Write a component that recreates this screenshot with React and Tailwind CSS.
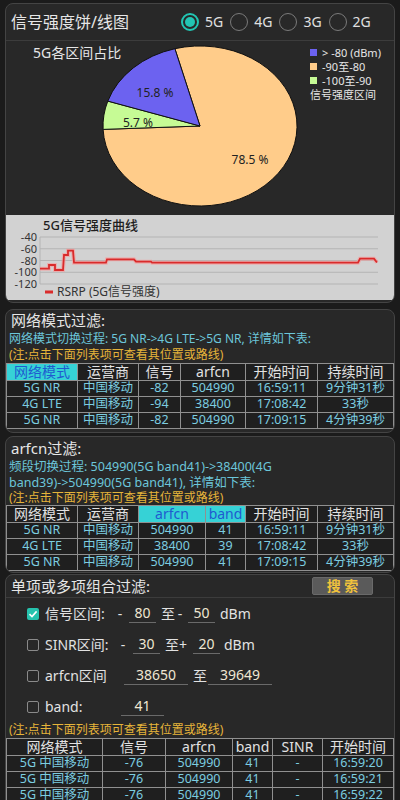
import React from "react";

function Radio({ label, checked }) {
  return (
    <div className="flex items-center gap-[6px]">
      {checked ? (
        <span className="w-[18px] h-[18px] rounded-full border-2 border-[#22c5b3] flex items-center justify-center">
          <span className="w-[10px] h-[10px] rounded-full bg-[#22c5b3]" />
        </span>
      ) : (
        <span className="w-[18px] h-[18px] rounded-full border-[1.5px] border-[#7a7a7a]" />
      )}
      <span className="text-[14px] leading-none text-[#e0e0e0]">{label}</span>
    </div>
  );
}

function Table({ gridClass, header, hl = [], rows }) {
  return (
    <div className={"grid gap-px bg-[#909090] p-px " + gridClass}>
      {header.map((h, i) => (
        <div
          key={"h" + i}
          className={
            "h-[16px] flex items-center justify-center text-[14px] leading-none " +
            (hl.includes(i) ? "bg-[#36d2d6] text-[#1f5bd0]" : "bg-[#1f1f1f] text-[#e2e2e2]")
          }
        >
          {h}
        </div>
      ))}
      {rows.map((r, ri) =>
        r.map((c, ci) => (
          <div
            key={ri + "-" + ci}
            className="h-[15px] flex items-center justify-center bg-[#1f1f1f] text-[12.5px] leading-none text-[#7ccde0] whitespace-nowrap"
          >
            {c}
          </div>
        ))
      )}
    </div>
  );
}

function Note() {
  return <span className="text-[12px] leading-none text-[#e6b43a]">(注:点击下面列表项可查看其位置或路线)</span>;
}

function Check({ checked }) {
  return checked ? (
    <span className="w-[12px] h-[12px] rounded-[2px] bg-[#26c2ad] flex items-center justify-center">
      <svg width="10" height="10" viewBox="0 0 10 10">
        <path d="M1.5 5.2 L4 7.6 L8.6 2.4" fill="none" stroke="#ffffff" strokeWidth="1.6" />
      </svg>
    </span>
  ) : (
    <span className="w-[12px] h-[12px] rounded-[2px] border-[1.5px] border-[#8a8a8a]" />
  );
}

function Input({ value, w }) {
  return (
    <span className={"h-[18px] flex items-center justify-center border-b border-[#6a6a6a] text-[14px] leading-none text-[#efe6d2] " + w}>
      {value}
    </span>
  );
}

export default function App() {
  const orange = "#ffcc8a";
  const blue = "#6c62f0";
  const green = "#c6fb95";
  const linePts =
    "34,53.7 43,53.7 43,50 49,50 49,55 57,55 58,40 62,40 62,35.7 67,35.7 68,47.7 100,47.7 101,44.3 128,44.3 130,46.7 145,46.7 146,47.7 352,47.7 354,43.7 368,43.7 371,47.5";
  const ys = [22, 33.75, 45.5, 57.25, 69];
  const yl = ["-40", "-60", "-80", "-100", "-120"];

  return (
    <div className="w-[400px] h-[800px] overflow-hidden bg-[#1b1b1b] pt-[3px] font-['Noto_Sans','Noto_Sans_CJK_SC',sans-serif] text-[#e6e6e6]">
      {/* Card 1 */}
      <div className="mx-[5px] rounded-[8px] border border-[#444] bg-[#282828] overflow-hidden pb-[2px]">
        <div className="h-[37px] flex items-center border-b border-[#3c3c3c] pl-[5px]">
          <span className="w-[170px] text-[16px] leading-none text-[#e6e6e6]">信号强度饼/线图</span>
          <div className="flex items-center gap-[7px]">
            <Radio label="5G" checked />
            <Radio label="4G" />
            <Radio label="3G" />
            <Radio label="2G" />
          </div>
        </div>
        <div className="relative h-[174px]">
          <svg className="absolute inset-0" width="388" height="174" viewBox="0 0 388 174">
            <path d="M194,85 L168.9,7.7 A97,80 0 1 1 97.1,88.4 Z" fill={orange} stroke="#111" strokeWidth="1" />
            <path d="M194,85 L97.1,88.4 A97,80 0 0 1 101.8,60.1 Z" fill={green} stroke="#111" strokeWidth="1" />
            <path d="M194,85 L101.8,60.1 A97,80 0 0 1 168.9,7.7 Z" fill={blue} stroke="#111" strokeWidth="1" />
            <text x="149" y="56" textAnchor="middle" fontSize="12" fill="#222">15.8 %</text>
            <text x="132" y="86" textAnchor="middle" fontSize="12" fill="#222">5.7 %</text>
            <text x="244" y="123" textAnchor="middle" fontSize="12" fill="#222">78.5 %</text>
          </svg>
          <div className="relative flex">
            <span className="pl-[27px] pt-[4px] text-[14px] leading-[16px] text-[#e6e6e6]">5G各区间占比</span>
            <div className="ml-auto w-[84px] pt-[4px] flex flex-col text-[11px] leading-none text-[#e6e6e6]">
              <div className="h-[14px] flex items-center gap-[5px]">
                <span className="w-[7px] h-[7px] bg-[#6c62f0]" />
                <span>&gt; -80 (dBm)</span>
              </div>
              <div className="h-[14px] flex items-center gap-[5px]">
                <span className="w-[7px] h-[7px] bg-[#ffcc8a]" />
                <span>-90至-80</span>
              </div>
              <div className="h-[14px] flex items-center gap-[5px]">
                <span className="w-[7px] h-[7px] bg-[#c6fb95]" />
                <span>-100至-90</span>
              </div>
              <div className="h-[14px] flex items-center">
                <span>信号强度区间</span>
              </div>
            </div>
          </div>
        </div>
        <div className="h-[85px] bg-[#d2d2d2]">
          <svg width="387" height="85" viewBox="0 0 387 85">
            <text x="37" y="15" fontSize="13" fill="#1e1e1e" fontWeight="500">5G信号强度曲线</text>
            {ys.map((y, i) => (
              <g key={i}>
                <line x1="34" x2="372" y1={y} y2={y} stroke="#b4b4b4" strokeWidth="1" />
                <text x="31" y={y + 4} textAnchor="end" fontSize="11" fill="#333">{yl[i]}</text>
              </g>
            ))}
            <line x1="34" x2="34" y1="22" y2="69" stroke="#b4b4b4" strokeWidth="1" />
            <polyline points={linePts} fill="none" stroke="#f3a0a0" strokeWidth="4" opacity="0.7" />
            <polyline points={linePts} fill="none" stroke="#d92b2b" strokeWidth="1.8" />
            <line x1="39" x2="47" y1="77" y2="77" stroke="#d92b2b" strokeWidth="3" />
            <text x="51" y="81" fontSize="12" fill="#333">RSRP (5G信号强度)</text>
          </svg>
        </div>
      </div>

      {/* Card 2 */}
      <div className="mx-[5px] mt-[6px] rounded-[8px] border border-[#444] bg-[#282828] overflow-hidden pb-[3px]">
        <div className="h-[20px] flex items-center pl-[5px] text-[15px] leading-none text-[#e6e6e6]">网络模式过滤:</div>
        <div className="h-[17px] flex items-center pl-[3px] text-[12px] leading-none text-[#6cc6da] whitespace-nowrap">
          网络模式切换过程: 5G NR-&gt;4G LTE-&gt;5G NR, 详情如下表:
        </div>
        <div className="h-[16px] flex items-center pl-[3px]">
          <Note />
        </div>
        <Table
          gridClass="grid-cols-[70px_60px_41px_64px_71px_1fr]"
          header={["网络模式", "运营商", "信号", "arfcn", "开始时间", "持续时间"]}
          hl={[0]}
          rows={[
            ["5G NR", "中国移动", "-82", "504990", "16:59:11", "9分钟31秒"],
            ["4G LTE", "中国移动", "-94", "38400", "17:08:42", "33秒"],
            ["5G NR", "中国移动", "-82", "504990", "17:09:15", "4分钟39秒"],
          ]}
        />
      </div>

      {/* Card 3 */}
      <div className="mx-[5px] mt-[3px] rounded-[8px] border border-[#444] bg-[#282828] overflow-hidden pb-[1px]">
        <div className="h-[22px] flex items-center pl-[5px] text-[15px] leading-none text-[#e6e6e6]">arfcn过滤:</div>
        <div className="h-[16px] flex items-center pl-[3px] text-[12.5px] leading-none text-[#6cc6da] whitespace-nowrap">
          频段切换过程: 504990(5G band41)-&gt;38400(4G
        </div>
        <div className="h-[16px] flex items-center pl-[3px] text-[12.5px] leading-none text-[#6cc6da] whitespace-nowrap">
          band39)-&gt;504990(5G band41), 详情如下表:
        </div>
        <div className="h-[14px] flex items-center pl-[3px]">
          <Note />
        </div>
        <Table
          gridClass="grid-cols-[70px_60px_66px_39px_71px_1fr]"
          header={["网络模式", "运营商", "arfcn", "band", "开始时间", "持续时间"]}
          hl={[2, 3]}
          rows={[
            ["5G NR", "中国移动", "504990", "41", "16:59:11", "9分钟31秒"],
            ["4G LTE", "中国移动", "38400", "39", "17:08:42", "33秒"],
            ["5G NR", "中国移动", "504990", "41", "17:09:15", "4分钟39秒"],
          ]}
        />
      </div>

      {/* Card 4 */}
      <div className="mx-[5px] mt-[1px] rounded-t-[8px] border border-[#444] bg-[#282828] overflow-hidden">
        <div className="h-[23px] flex items-center border-b border-[#3c3c3c] pl-[5px]">
          <span className="text-[15px] leading-none text-[#e6e6e6]">单项或多项组合过滤:</span>
          <span className="ml-auto mr-[21px] w-[61px] h-[18px] flex items-center justify-center rounded-[2px] bg-[#5a5a5a] border border-[#6a6a6a] text-[14px] leading-none font-bold text-[#f0c23c]">
            搜 索
          </span>
        </div>
        <div className="h-[31px] flex items-center pl-[21px] text-[14px] leading-none text-[#e2e2e2]">
          <Check checked />
          <span className="ml-[6px] w-[70px]">信号区间:</span>
          <span className="w-[10px] text-center">-</span>
          <span className="ml-[4px]"><Input value="80" w="w-[27px]" /></span>
          <span className="ml-[5px]">至</span>
          <span className="w-[10px] text-center">-</span>
          <span className="ml-[3px]"><Input value="50" w="w-[27px]" /></span>
          <span className="ml-[5px]">dBm</span>
        </div>
        <div className="h-[31px] flex items-center pl-[21px] text-[14px] leading-none text-[#e2e2e2]">
          <Check />
          <span className="ml-[6px] w-[73px]">SINR区间:</span>
          <span className="w-[10px] text-center">-</span>
          <span className="ml-[5px]"><Input value="30" w="w-[27px]" /></span>
          <span className="ml-[5px]">至</span>
          <span className="w-[8px] text-center">+</span>
          <span className="ml-[6px]"><Input value="20" w="w-[27px]" /></span>
          <span className="ml-[4px]">dBm</span>
        </div>
        <div className="h-[31px] flex items-center pl-[21px] text-[14px] leading-none text-[#e2e2e2]">
          <Check />
          <span className="ml-[6px] w-[79px]">arfcn区间</span>
          <Input value="38650" w="w-[64px]" />
          <span className="ml-[5px] w-[15px]">至</span>
          <Input value="39649" w="w-[64px]" />
        </div>
        <div className="h-[31px] flex items-center pl-[21px] text-[14px] leading-none text-[#e2e2e2]">
          <Check />
          <span className="ml-[6px] w-[76px]">band:</span>
          <Input value="41" w="w-[43px]" />
        </div>
        <div className="h-[16px] flex items-center pl-[3px]">
          <Note />
        </div>
        <Table
          gridClass="grid-cols-[95px_62px_66px_39px_49px_1fr]"
          header={["网络模式", "信号", "arfcn", "band", "SINR", "开始时间"]}
          rows={[
            ["5G 中国移动", "-76", "504990", "41", "-", "16:59:20"],
            ["5G 中国移动", "-76", "504990", "41", "-", "16:59:21"],
            ["5G 中国移动", "-76", "504990", "41", "-", "16:59:22"],
          ]}
        />
      </div>
    </div>
  );
}
